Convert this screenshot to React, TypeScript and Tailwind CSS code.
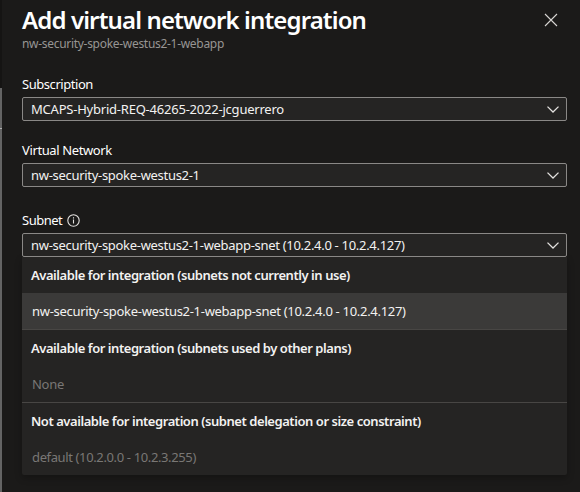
import React from "react";

function Chevron() {
  return (
    <svg width="12" height="7" viewBox="0 0 12 7" fill="none" className="mt-px mr-[7px] shrink-0">
      <path d="M0.5 0.6 L6 6 L11.5 0.6" stroke="#e4e2e0" strokeWidth="1.3" />
    </svg>
  );
}

function Select({ value, tracking }: { value: string; tracking: string }) {
  return (
    <div className="flex h-6 items-center justify-between rounded-[2px] border border-[#8a8886] bg-[#252423] pl-2">
      <span className={`text-[13px] leading-[18px] text-[#f3f2f1] ${tracking}`}>{value}</span>
      <Chevron />
    </div>
  );
}

function Label({ children, tracking }: { children: React.ReactNode; tracking: string }) {
  return <div className={`flex h-[18px] items-center text-[13px] leading-[18px] text-white ${tracking}`}>{children}</div>;
}

function GroupHeader({ children }: { children: React.ReactNode }) {
  return (
    <div className="flex h-9 items-center pt-[2px] pl-[9px] text-[13px] font-semibold tracking-[-0.445px] text-[#f3f2f1]">
      {children}
    </div>
  );
}

export default function App() {
  return (
    <div className="flex h-[492px] w-[580px] overflow-hidden bg-[#1b1a19] font-['Noto_Sans','Open_Sans',sans-serif] whitespace-nowrap">
      <div className="flex w-[2px] shrink-0 flex-col">
        <div className="h-[88px] bg-[#151413]" />
        <div className="h-10 bg-[#646464]" />
        <div className="h-px bg-[#b0b0b0]" />
        <div className="flex-1 bg-[#646464]" />
      </div>
      <main className="flex-1 pr-[13px] pl-5">
        <header className="flex h-[75px] justify-between">
          <div>
            <h1 className="pt-1 text-[24px] leading-[32px] font-semibold tracking-[-0.87px] text-white">Add virtual network integration</h1>
            <p className="text-[12px] leading-4 tracking-[-0.3px] text-[#979593]">nw-security-spoke-westus2-1-webapp</p>
          </div>
          <svg width="14" height="14" viewBox="0 0 14 14" className="mt-[13px] mr-[9px]">
            <path d="M1 1 L13 13 M13 1 L1 13" stroke="#d8d6d4" strokeWidth="1.1" />
          </svg>
        </header>
        <section className="flex h-[66px] flex-col gap-1">
          <Label tracking="tracking-[-0.45px]">Subscription</Label>
          <Select value="MCAPS-Hybrid-REQ-46265-2022-jcguerrero" tracking="tracking-[-0.22px]" />
        </section>
        <section className="flex h-[70px] flex-col gap-1">
          <Label tracking="tracking-[-0.38px]">Virtual Network</Label>
          <Select value="nw-security-spoke-westus2-1" tracking="tracking-[-0.3px]" />
        </section>
        <section className="flex flex-col gap-1">
          <Label tracking="tracking-[-0.5px]">
            Subnet
            <svg width="13" height="13" viewBox="0 0 13 13" fill="none" className="mt-px ml-[5px]">
              <circle cx="6.5" cy="6.5" r="5.7" stroke="#e4e2e0" strokeWidth="1.1" />
              <path d="M6.5 5.6V9.5M6.5 3.3V4.5" stroke="#e4e2e0" strokeWidth="1.1" />
            </svg>
          </Label>
          <Select value="nw-security-spoke-westus2-1-webapp-snet (10.2.4.0 - 10.2.4.127)" tracking="tracking-[-0.3px]" />
        </section>
        <div className="h-[218px] rounded-b-[2px] bg-[#252423] text-[13px] shadow-[0_3px_7px_rgba(0,0,0,0.25)]">
          <GroupHeader>Available for integration (subnets not currently in use)</GroupHeader>
          <div className="flex h-[37px] items-center border-b border-[#484644] bg-[#3b3a39] pt-[2px] pl-[10px] tracking-[-0.3px] text-[#f3f2f1]">
            nw-security-spoke-westus2-1-webapp-snet (10.2.4.0 - 10.2.4.127)
          </div>
          <GroupHeader>Available for integration (subnets used by other plans)</GroupHeader>
          <div className="flex h-[37px] items-center border-b border-[#484644] pt-[2px] pl-[10px] tracking-[-0.3px] text-[#797775]">None</div>
          <GroupHeader>Not available for integration (subnet delegation or size constraint)</GroupHeader>
          <div className="flex h-9 items-center pt-[2px] pl-[10px] tracking-[-0.37px] text-[#797775]">default (10.2.0.0 - 10.2.3.255)</div>
        </div>
      </main>
    </div>
  );
}
